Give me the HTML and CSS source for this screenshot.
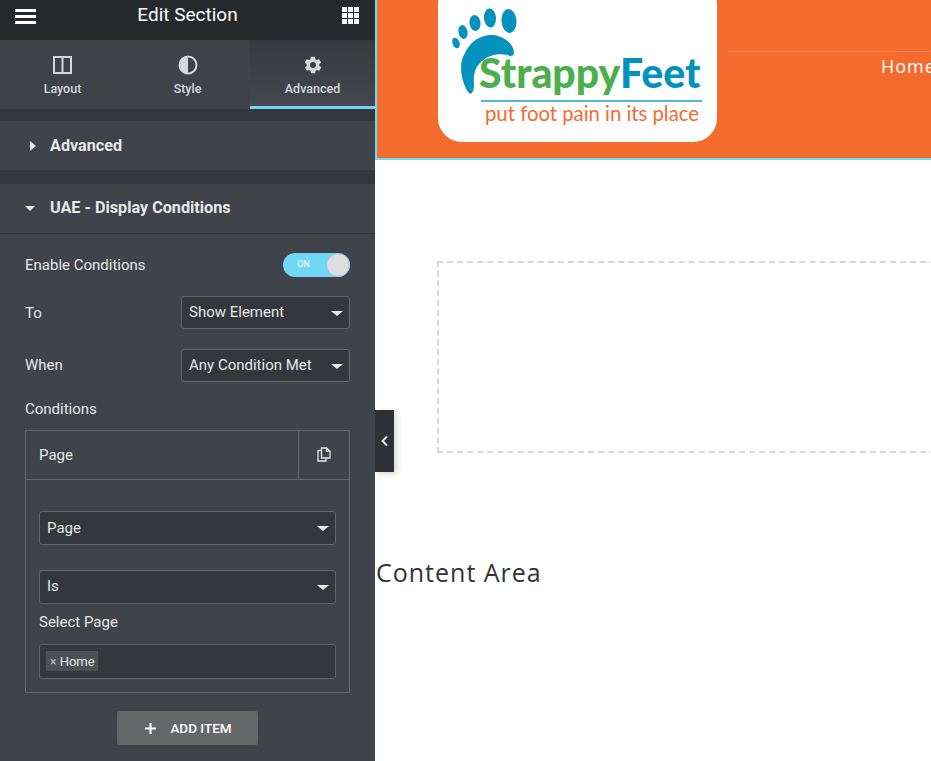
FILE: index.html
```html
<!DOCTYPE html>
<html>
	<head>
		<meta charset="UTF-8">
		<title>Edit Section</title>
		<link rel="stylesheet" href="styles.css">
	</head>
	<body>
		<div class="panel">
			<div class="panel-head">
				<div class="burger"><i></i><i></i><i></i></div>
				<div class="panel-title">Edit Section</div>
				<svg class="apps" width="17" height="17" viewBox="0 0 17 17" fill="#fff">
					<rect x="0" y="0" width="5" height="5"/><rect x="6" y="0" width="5" height="5"/><rect x="12" y="0" width="5" height="5"/>
					<rect x="0" y="6" width="5" height="5"/><rect x="6" y="6" width="5" height="5"/><rect x="12" y="6" width="5" height="5"/>
					<rect x="0" y="12" width="5" height="5"/><rect x="6" y="12" width="5" height="5"/><rect x="12" y="12" width="5" height="5"/>
				</svg>
			</div>
			<div class="tabs">
				<div class="tab">
					<svg width="20" height="20" viewBox="0 0 20 20" fill="none" stroke="#d5d8dc" stroke-width="2"><rect x="1" y="2" width="17" height="16"/><path d="M9.500 2v16"/></svg>
					<span>Layout</span>
				</div>
				<div class="tab">
					<svg width="20" height="20" viewBox="0 0 20 20"><circle cx="10" cy="10" r="8.500" fill="none" stroke="#d5d8dc" stroke-width="2"/><path d="M10 2a8 8 0 0 0 0 16z" fill="#d5d8dc"/></svg>
					<span>Style</span>
				</div>
				<div class="tab tab-on">
					<svg width="20" height="20" viewBox="0 0 24 24" fill="#d5d8dc"><path d="M19.400 13c.1-.3.1-.7.1-1s0-.7-.1-1l2.100-1.600c.2-.2.2-.4.1-.6l-2-3.500c-.1-.2-.4-.3-.6-.2l-2.500 1c-.5-.4-1.100-.7-1.700-1l-.4-2.600c0-.3-.2-.4-.5-.4h-4c-.2 0-.5.100-.5.400l-.4 2.600c-.6.300-1.200.6-1.700 1l-2.500-1c-.2-.1-.5 0-.6.200l-2 3.500c-.1.200-.1.500.1.600L4.600 11c-.1.300-.1.700-.1 1s0 .7.1 1l-2.100 1.600c-.2.200-.2.400-.1.600l2 3.500c.1.200.4.300.6.200l2.500-1c.5.400 1.100.7 1.700 1l.4 2.600c0 .3.300.4.500.4h4c.3 0 .5-.1.500-.4l.4-2.600c.6-.3 1.200-.6 1.700-1l2.500 1c.2.100.5 0 .6-.2l2-3.500c.1-.2.100-.4-.1-.6zM12 15.500a3.500 3.500 0 1 1 0-7 3.500 3.500 0 0 1 0 7z"/></svg>
					<span>Advanced</span>
				</div>
			</div>
			<div class="section section-first">
				<i class="caret-right"></i>
				<span>Advanced</span>
			</div>
			<div class="section section-open">
				<i class="caret-down"></i>
				<span>UAE - Display Conditions</span>
			</div>
			<div class="controls">
				<div class="row row-enable">
					<label>Enable Conditions</label>
					<div class="switch"><span>ON</span><i></i></div>
				</div>
				<div class="row row-to">
					<label>To</label>
					<div class="select select-small">Show Element</div>
				</div>
				<div class="row row-when">
					<label>When</label>
					<div class="select select-small">Any Condition Met</div>
				</div>
				<div class="cond-label">Conditions</div>
				<div class="repeater">
					<div class="rep-head">
						<div class="rep-title">Page</div>
						<div class="rep-copy">
							<svg width="14" height="15" viewBox="0 0 14 15" fill="none" stroke="#e6e8ea" stroke-width="1.300"><path d="M4.500 1h5L13 4.200V11H4.500z"/><path d="M9.500 1v3.200H13"/><path d="M4.500 3.500H1V14h8v-3"/></svg>
						</div>
					</div>
					<div class="rep-body">
						<div class="select select-wide">Page</div>
						<div class="select select-wide select-is">Is</div>
						<div class="sel-label">Select Page</div>
						<div class="multi"><span class="tag"><b>×</b> Home</span></div>
					</div>
				</div>
				<div class="add-wrap">
					<div class="add-btn">
						<svg width="11" height="11" viewBox="0 0 11 11" fill="#fff"><rect x="4.500" width="2" height="11"/><rect y="4.500" width="11" height="2"/></svg>
						<span>ADD ITEM</span>
					</div>
				</div>
			</div>
		</div>
		<div class="main">
			<div class="collapse">
				<svg width="8" height="12" viewBox="0 0 8 12" fill="none" stroke="#e6e8ea" stroke-width="2"><path d="M6 1.500L1.500 6 6 10.500"/></svg>
			</div>
			<div class="site-head">
				<div class="logo">
					<svg class="foot" width="70" height="100" viewBox="0 0 70 100" fill="#0392bd">
						<ellipse cx="8" cy="43" rx="3.500" ry="5.500" transform="rotate(-20 8 43)"/>
						<ellipse cx="15" cy="32" rx="4.500" ry="7" transform="rotate(-12 15 32)"/>
						<ellipse cx="27" cy="23" rx="5.500" ry="8" transform="rotate(-8 27 23)"/>
						<ellipse cx="42" cy="18" rx="6" ry="9.500" transform="rotate(-4 42 18)"/>
						<ellipse cx="61" cy="21" rx="7.500" ry="12" transform="rotate(-4 61 21)"/>
						<path d="M21 93C14 85 10 65 16 55C22 40 35 34 45 35C56 36 66 44 66 53C66 56 62 57 60 55C50 53 40 55 33 62C27 68 25 74 26 85C26 92 23 95 21 93z"/>
					</svg>
					<div class="brand"><span class="brand-a">Strappy</span><span class="brand-b">Feet</span></div>
					<div class="tagline">put foot pain in its place</div>
				</div>
				<div class="nav">
					<div class="nav-line"></div>
					<div class="nav-link">Home</div>
				</div>
			</div>
			<div class="dash-wrap"><div class="dash"></div></div>
			<div class="content-area">Content Area</div>
		</div>
	</body>
</html>
```

FILE: styles.css
```css
* {margin:0; padding:0; box-sizing:border-box;}
html,body {height:761px; overflow:hidden;}
body {display:flex; background:#fff; font-family:Roboto,"Liberation Sans",sans-serif;}

.panel {width:375px; height:761px; flex:none; background:#404349; color:#e6e8ea; font-size:15px; overflow:hidden;}
.panel-head {height:40px; background:#26292c; display:flex; align-items:flex-start; justify-content:space-between; padding:7px 16px 0 15px;}
.burger {width:21px; padding-top:2px;}
.burger i {display:block; height:3px; background:#fff; margin-bottom:3px;}
.panel-title {font-size:19px; color:#fff; margin-top:-2px; margin-left:-3px; line-height:20px;}
.apps {display:block;}

.tabs {height:69px; display:flex; background:#404349;}
.tab {flex:1; display:flex; flex-direction:column; align-items:center; padding-top:15px; font-size:12.500px; font-weight:500; color:#d5d8dc; background:#3f4248;}
.tab span {margin-top:5px; line-height:17px;}
.tab-on {background:linear-gradient(#36393e,#44474e); border-bottom:3px solid #71d7f7;}

.section {display:flex; align-items:center; background:#404349; font-weight:700; font-size:16.200px; color:#e6e8ea;}
.section-first {margin-top:12px; height:49px; box-shadow:0 -12px 0 #34373c; margin-bottom:14px; padding-left:30px;}
.section-first span {margin-left:14px;}
.section-open {height:50px; box-shadow:0 -14px 0 #34373c; border-bottom:1px solid #34373c; padding:0 0 2px 25px;}
.section-open span {margin-left:15px;}
.caret-right {width:0; height:0; border-left:6px solid #e6e8ea; border-top:5px solid transparent; border-bottom:5px solid transparent;}
.caret-down {width:0; height:0; border-top:5px solid #e6e8ea; border-left:5px solid transparent; border-right:5px solid transparent; margin-top:1px;}

.controls {padding:0 25px;}
.row {display:flex; align-items:center; justify-content:space-between;}
.row-enable {margin-top:19px; height:24px;}
.row-to {margin-top:19px;}
.row-when {margin-top:20px;}
.row-when label {margin-bottom:2px;}
.switch {width:67px; height:24px; border-radius:12px; background:#71d7f7; position:relative; font-size:9px; color:#fff; padding:0 0 0 14px; line-height:23px;}
.switch i {position:absolute; right:0; top:0; width:24px; height:24px; border-radius:50%; background:#dcdee0; border:1px solid #8cc8dc;}

.select {height:33px; border:1px solid #64666a; border-radius:3px; background:#34373c; color:#e6e8ea; line-height:31px; padding-left:7px; position:relative;}
.select::after {content:""; position:absolute; right:6px; top:14px; border-top:5px solid #e6e8ea; border-left:6px solid transparent; border-right:6px solid transparent;}
.select-small {width:169px;}
.select-wide {height:34px; line-height:32px;}
.select-is {margin-top:25px; line-height:31px;}

.cond-label {margin-top:18px; line-height:18px;}
.repeater {margin-top:12px; height:263px; border:1px solid #64666a;}
.rep-head {height:49px; display:flex; border-bottom:1px solid #64666a;}
.rep-title {flex:1; padding-left:13px; line-height:48px;}
.rep-copy {width:51px; border-left:1px solid #64666a; display:flex; align-items:center; justify-content:center; padding-bottom:2px;}
.rep-body {padding:31px 13px 0;}
.sel-label {margin-top:9px; line-height:18px;}
.multi {margin-top:13px; height:35px; border:1px solid #64666a; border-radius:3px; background:#34373c; padding:6px;}
.tag {display:inline-block; height:20px; width:52px; background:#4d5056; font-size:13px; line-height:22px; padding-left:4px; vertical-align:top;}
.tag b {font-weight:400; color:#c2c4c8; font-size:12px;}

.add-wrap {display:flex; justify-content:center; margin-top:18px;}
.add-btn {width:141px; height:34px; background:#65676b; border-radius:3px; display:flex; align-items:center; justify-content:center; gap:14px; color:#fff; font-size:13.500px; font-weight:500; padding-left:2px;}

.main {flex:1; min-width:0; height:761px; position:relative; overflow:hidden; font-family:"Open Sans","Noto Sans",sans-serif;}
.collapse {position:absolute; left:0; top:410px; width:19px; height:62px; background:#2f3136; display:flex; align-items:center; justify-content:center; box-shadow:3px 2px 6px rgba(0,0,0,.15); z-index:2;}
.site-head {height:160px; background:#f36c2e; border-left:2px solid #71d7f7; border-bottom:2px solid #71d7f7; display:flex; padding-left:61px;}
.logo {width:279px; height:162px; flex:none; margin-top:-20px; background:#fff; border-radius:24px; position:relative;}
.foot {position:absolute; left:10px; top:20px;}
.brand {position:absolute; left:41px; top:69px; font-family:Lato,"Noto Sans",sans-serif; font-weight:900; font-size:41px; line-height:48px; white-space:nowrap;}
.brand-a {color:#4caf4b;}
.brand-b {color:#0392bd;}
.tagline {position:absolute; left:43px; top:120px; width:221px; padding:0 0 0 4px; border-top:2px solid #55b6d4; font-family:Lato,"Noto Sans",sans-serif; font-size:20.300px; line-height:22px; color:#f36c2e; white-space:nowrap;}
.nav {flex:1; margin-left:11px; min-width:0;}
.nav-line {margin-top:51px; height:1px; background:#f58a58;}
.nav-link {margin:2px 0 0 153px; font-size:18px; font-weight:500; line-height:24px; color:#fff; letter-spacing:1px; white-space:nowrap;}

.dash-wrap {padding:101px 0 0 62px;}
.dash {width:600px; height:192px; border:2px dashed #d5d8dc;}
.content-area {margin-top:101px; padding-left:1px; font-size:25px; line-height:36px; letter-spacing:1px; color:#333; white-space:nowrap;}
```
